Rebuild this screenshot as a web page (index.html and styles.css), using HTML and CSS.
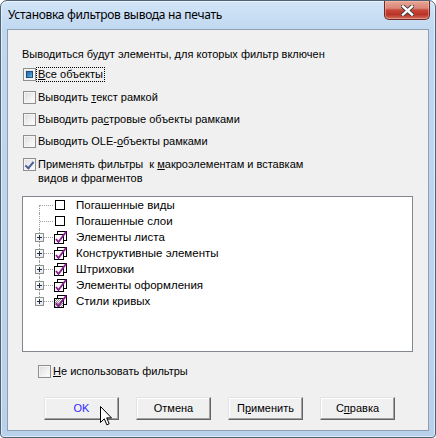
FILE: index.html
```html
<!DOCTYPE html>
<html lang="ru">
<head>
<meta charset="utf-8">
<title>Установка фильтров вывода на печать</title>
<link rel="stylesheet" href="styles.css">
</head>
<body>
<svg width="0" height="0" class="defs">
  <defs>
    <pattern id="hatch" width="2" height="2" patternUnits="userSpaceOnUse">
      <rect width="2" height="2" fill="#ffffff"/>
      <rect width="1" height="1" fill="#8a8a8a"/>
      <rect x="1" y="1" width="1" height="1" fill="#8a8a8a"/>
    </pattern>
    <symbol id="ico-check" viewBox="0 0 13 13">
      <rect x="3.5" y="0.5" width="9" height="9" fill="#fff" stroke="#000"/>
      <rect x="0.5" y="3.5" width="9" height="9" fill="#fff" stroke="#000"/>
      <polyline points="2,8 4.5,11 12.3,0.5" fill="none" stroke="#8b1a8b" stroke-width="1.8"/>
    </symbol>
    <symbol id="ico-part" viewBox="0 0 13 13">
      <rect x="3.5" y="0.5" width="9" height="9" fill="#fff" stroke="#000"/>
      <rect x="0.5" y="3.5" width="9" height="9" fill="url(#hatch)" stroke="#000"/>
      <polyline points="2,8 4.5,11 12.3,0.5" fill="none" stroke="#8b1a8b" stroke-width="1.8"/>
    </symbol>
    <symbol id="ico-empty" viewBox="0 0 13 13">
      <rect x="1.5" y="1.5" width="9" height="9" fill="#fff" stroke="#000"/>
    </symbol>
  </defs>
</svg>

<div class="window">
  <div class="titlebar">
    <span class="title">Установка фильтров вывода на печать</span>
    <div class="close">
      <svg width="13" height="11" viewBox="0 0 13 11">
        <path d="M2 1.5 L11 9.5 M11 1.5 L2 9.5" stroke="#3b3b3b" stroke-width="4.2" stroke-linecap="square"/>
        <path d="M2 1.5 L11 9.5 M11 1.5 L2 9.5" stroke="#ffffff" stroke-width="2.4" stroke-linecap="square"/>
      </svg>
    </div>
  </div>

  <div class="client">
    <p class="caption">Выводиться будут элементы, для которых фильтр включен</p>

    <div class="opts">
      <label class="opt first"><span class="cb ind"></span><span class="focus"><u>В</u>се объекты</span></label>
      <label class="opt"><span class="cb"></span><span>Выводить <u>т</u>екст рамкой</span></label>
      <label class="opt"><span class="cb"></span><span>Выводить ра<u>с</u>тровые объекты рамками</span></label>
      <label class="opt"><span class="cb"></span><span>Выводить OLE-<u>о</u>бъекты рамками</span></label>
      <label class="opt multi"><span class="cb chk"></span><span>Применять фильтры&nbsp; к <u>м</u>акроэлементам и вставкам<br>видов и фрагментов</span></label>
    </div>

    <div class="tree">
      <div class="node top"><span class="exp none"></span><svg class="ico"><use href="#ico-empty"/></svg><span class="lbl">Погашенные виды</span></div>
      <div class="node"><span class="exp none"></span><svg class="ico"><use href="#ico-empty"/></svg><span class="lbl">Погашенные слои</span></div>
      <div class="node"><span class="exp"></span><svg class="ico"><use href="#ico-check"/></svg><span class="lbl">Элементы листа</span></div>
      <div class="node"><span class="exp"></span><svg class="ico"><use href="#ico-check"/></svg><span class="lbl">Конструктивные элементы</span></div>
      <div class="node"><span class="exp"></span><svg class="ico"><use href="#ico-check"/></svg><span class="lbl">Штриховки</span></div>
      <div class="node"><span class="exp"></span><svg class="ico"><use href="#ico-check"/></svg><span class="lbl">Элементы оформления</span></div>
      <div class="node bottom"><span class="exp"></span><svg class="ico"><use href="#ico-part"/></svg><span class="lbl">Стили кривых</span></div>
    </div>

    <label class="opt nofilter"><span class="cb"></span><span><u>Н</u>е использовать фильтры</span></label>

    <div class="buttons">
      <button class="btn ok">OK</button>
      <button class="btn">Отмена</button>
      <button class="btn">П<u>р</u>именить</button>
      <button class="btn">С<u>п</u>равка</button>
      <svg class="cursor" width="13" height="21" viewBox="0 0 13 21">
        <path d="M0.5 0.5 L0.5 16.5 L4.3 12.8 L6.8 18.8 L9.2 17.8 L6.7 11.9 L11.5 11.9 Z" fill="#fff" stroke="#000" stroke-width="1" stroke-linejoin="miter"/>
      </svg>
    </div>
  </div>
</div>
</body>
</html>
```

FILE: styles.css
```css
html, body {
  margin: 0;
  padding: 0;
  background: #ffffff;
}

.defs {
  position: absolute;
  width: 0;
  height: 0;
}

.window {
  width: 436px;
  height: 438px;
  box-sizing: border-box;
  border: 1px solid #4f6276;
  border-radius: 7px 7px 4px 4px;
  background: linear-gradient(180deg, #d2e5f8 0px, #bfd7f0 30px, #b9d1ea 100%);
  box-shadow: inset 0 0 0 1px rgba(255, 255, 255, 0.55);
  padding: 0 6px 6px 6px;
  display: flex;
  flex-direction: column;
  font-family: "Liberation Sans", Arial, sans-serif;
  font-size: 11px;
  color: #000;
}

.titlebar {
  height: 28px;
  display: flex;
  align-items: flex-start;
  position: relative;
}

.title {
  font-family: "Noto Sans", "Open Sans", sans-serif;
  letter-spacing: -0.3px;
  font-size: 12px;
  line-height: 16px;
  margin-top: 6px;
  padding-left: 1px;
  color: #000;
}

.close {
  margin-left: auto;
  margin-right: -1px;
  width: 46px;
  height: 19px;
  box-sizing: border-box;
  border: 1px solid #6d2a24;
  border-top: none;
  border-radius: 0 0 5px 5px;
  background: linear-gradient(180deg, #e8a696 0%, #d98677 40%, #c7483a 50%, #b93426 75%, #d1705f 100%);
  box-shadow: inset 0 0 0 1px rgba(255, 200, 190, 0.45);
  display: flex;
  align-items: center;
  justify-content: center;
}

.client {
  flex: 1;
  background: #f0f0f0;
  border: 1px solid #8e9fb3;
  padding: 18px 14px 0 14px;
  display: flex;
  flex-direction: column;
}

.caption {
  margin: 0;
  line-height: 13px;
}

.opts {
  display: flex;
  flex-direction: column;
  gap: 9px;
  margin-top: 7px;
}

.opt {
  display: flex;
  align-items: flex-start;
  line-height: 13px;
  gap: 2px;
  margin-left: 1px;
}

.opt.first {
  margin-bottom: 1px;
}

.opt.multi {
  line-height: 14px;
}

.opt.multi .cb {
  margin-top: 0.5px;
}

.cb {
  flex: none;
  width: 13px;
  height: 13px;
  box-sizing: border-box;
  border: 1px solid #8f8f8f;
  background: linear-gradient(135deg, #dcdcdc 0%, #f2f2f2 60%, #ffffff 100%);
  box-shadow: inset 0 0 0 1px #f4f4f4;
  position: relative;
}

.cb.ind::after {
  content: "";
  position: absolute;
  left: 2px;
  top: 2px;
  width: 7px;
  height: 7px;
  border: 0.5px solid #1d4f7c;
  box-sizing: border-box;
  background: linear-gradient(135deg, #2d6aa5 0%, #3f88c4 55%, #7ac0ee 100%);
}

.cb.chk::after {
  content: "";
  position: absolute;
  left: 3px;
  top: 1px;
  width: 3px;
  height: 7px;
  border-right: 2px solid #4a5f97;
  border-bottom: 2px solid #4a5f97;
  transform: rotate(40deg);
}

.focus {
  outline: 1px dotted #000;
  outline-offset: 0;
  padding: 0 1px;
  margin-left: -1px;
}

u {
  text-decoration: underline;
  text-underline-offset: 1px;
}

.tree {
  margin-top: 11px;
  margin-right: 1px;
  height: 156px;
  box-sizing: border-box;
  border: 1px solid #828790;
  background: #ffffff;
  padding-top: 0;
}

.node {
  position: relative;
  height: 16px;
  display: flex;
  align-items: center;
  padding-left: 12px;
}

.node::before {
  content: "";
  position: absolute;
  left: 16px;
  top: 0;
  bottom: 0;
  border-left: 1px dotted #a0a0a0;
}

.node.top::before {
  top: 8px;
}

.node.bottom::before {
  bottom: 8px;
}

.node::after {
  content: "";
  position: absolute;
  left: 17px;
  width: 13px;
  top: 8px;
  border-top: 1px dotted #a0a0a0;
}

.exp {
  flex: none;
  width: 9px;
  height: 9px;
  box-sizing: border-box;
  border: 1px solid #919191;
  background: linear-gradient(135deg, #ffffff 0%, #e6e6e6 100%);
  position: relative;
  z-index: 1;
}

.exp::before {
  content: "";
  position: absolute;
  left: 1px;
  top: 3px;
  width: 5px;
  height: 1px;
  background: #203040;
}

.exp::after {
  content: "";
  position: absolute;
  left: 3px;
  top: 1px;
  width: 1px;
  height: 5px;
  background: #203040;
}

.exp.none {
  visibility: hidden;
}

.ico {
  flex: none;
  width: 13px;
  height: 13px;
  margin-left: 10px;
  position: relative;
  z-index: 1;
}

.lbl {
  margin-left: 9px;
  font-size: 11.5px;
  line-height: 14px;
}

.nofilter {
  margin-top: 13px;
  margin-left: 16px;
}

.buttons {
  position: relative;
  display: flex;
  gap: 17px;
  margin-top: 19px;
  margin-left: 22px;
}

.btn {
  width: 75px;
  height: 23px;
  box-sizing: border-box;
  font-family: "Liberation Sans", Arial, sans-serif;
  font-size: 11px;
  color: #000;
  background: #f0f0f0;
  border: 1px solid;
  border-color: #e3e3e3 #646464 #646464 #e3e3e3;
  box-shadow: inset -1px -1px 0 #a0a0a0, inset 1px 1px 0 #ffffff;
  padding: 0;
  line-height: 13px;
}

.btn.ok {
  color: #2a2aff;
}

.cursor {
  position: absolute;
  left: 56px;
  top: 9px;
}
```
